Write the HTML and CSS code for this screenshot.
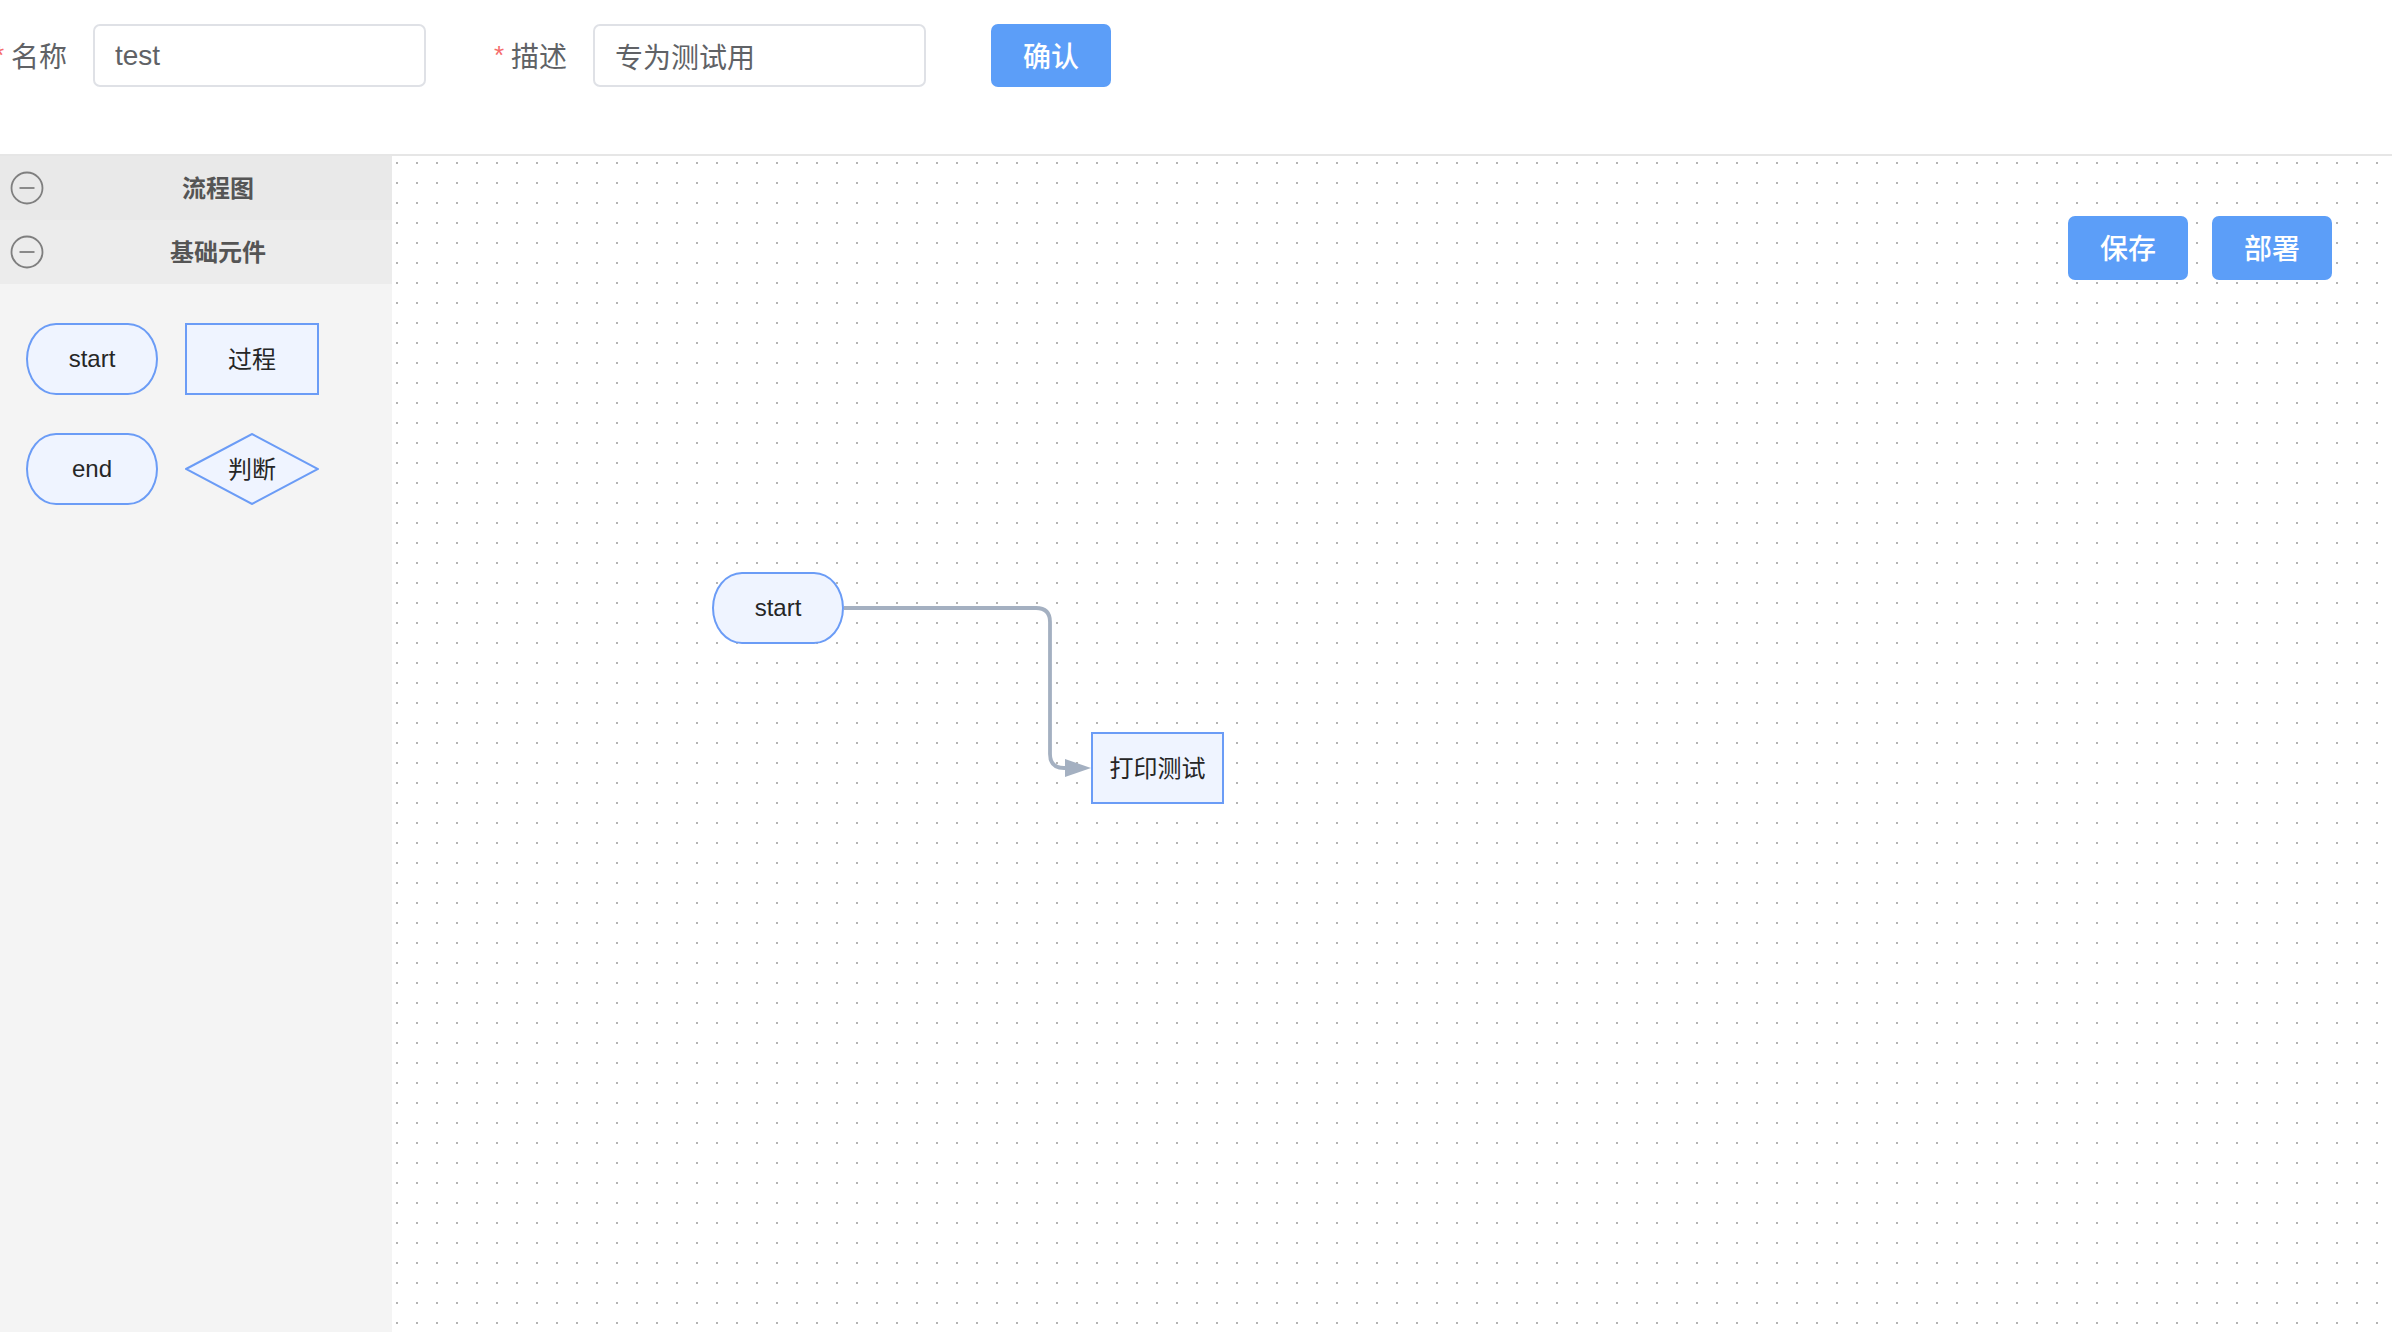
FILE: index.html
```html
<!DOCTYPE html>
<html lang="zh-CN">
<head>
<meta charset="utf-8">
<title>流程设计</title>
<link rel="stylesheet" href="styles.css">
</head>
<body>
<header class="topbar">
  <form class="form-row">
    <div class="form-item">
      <label class="form-label"><span class="star">*</span><span>名称</span></label>
      <input class="text-input" type="text" value="test">
    </div>
    <div class="form-item">
      <label class="form-label"><span class="star">*</span><span>描述</span></label>
      <input class="text-input" type="text" value="专为测试用">
    </div>
    <button type="button" class="btn">确认</button>
  </form>
</header>
<main class="workspace">
  <aside class="sidebar">
    <div class="panel-head head-a">
      <svg class="collapse-icon" viewBox="0 0 34 34" width="34" height="34"><circle cx="17" cy="17" r="15.5" fill="none" stroke="#7f7f7f" stroke-width="1.8"/><line x1="9.5" y1="17" x2="24.5" y2="17" stroke="#7f7f7f" stroke-width="1.8"/></svg>
      <span class="panel-title">流程图</span>
    </div>
    <div class="panel-head head-b">
      <svg class="collapse-icon" viewBox="0 0 34 34" width="34" height="34"><circle cx="17" cy="17" r="15.5" fill="none" stroke="#7f7f7f" stroke-width="1.8"/><line x1="9.5" y1="17" x2="24.5" y2="17" stroke="#7f7f7f" stroke-width="1.8"/></svg>
      <span class="panel-title">基础元件</span>
    </div>
    <div class="palette">
      <div class="shape pill">start</div>
      <div class="shape rect cjk">过程</div>
      <div class="shape pill">end</div>
      <div class="shape diamond cjk">
        <svg class="diamond-bg" viewBox="0 0 134 72" width="134" height="72"><polygon points="1,36 67,1 133,36 67,71" fill="#eff4ff" stroke="#6b9cf6" stroke-width="2"/></svg>
        <span class="diamond-text">判断</span>
      </div>
    </div>
  </aside>
  <section class="canvas">
    <div class="grid-dots"></div>
    <svg class="edges" width="2000" height="1176" viewBox="0 0 2000 1176">
      <path d="M452 452 H644 Q658 452 658 466 V598 Q658 612 672 612 H675" fill="none" stroke="#a4b0c1" stroke-width="3.8"/>
      <polygon points="673,603 699,612 673,621" fill="#a4b0c1"/>
    </svg>
    <div class="node pill node-start">start</div>
    <div class="node rect cjk node-print">打印测试</div>
    <div class="toolbar">
      <button type="button" class="btn btn-lg">保存</button>
      <button type="button" class="btn btn-lg">部署</button>
    </div>
  </section>
</main>
</body>
</html>
```
FILE: styles.css
```css
* { box-sizing: border-box; }
html, body {
  margin: 0;
  padding: 0;
  width: 2392px;
  height: 1332px;
  overflow: hidden;
  background: #ffffff;
  font-family: "Liberation Sans", "Noto Sans CJK SC", sans-serif;
}
.topbar {
  height: 156px;
  border-bottom: 2px solid #e6e6e6;
  padding-top: 24px;
}
.form-row {
  display: flex;
  align-items: center;
  gap: 65px;
  margin-left: -9px;
}
.form-item {
  display: flex;
  align-items: center;
}
.form-label {
  display: flex;
  align-items: center;
  font-size: 28px;
  line-height: 63px;
  color: #606266;
  padding-right: 26px;
  font-family: "Noto Sans CJK SC", sans-serif;
}
.star {
  display: inline-block;
  color: #f56c6c;
  width: 13px;
  text-align: right;
  margin-right: 7px;
  font-family: "Liberation Sans", sans-serif;
  font-size: 26px;
}
.text-input {
  width: 333px;
  height: 63px;
  border: 2px solid #dfe1e6;
  border-radius: 7px;
  padding: 0 20px;
  font-size: 28px;
  color: #606266;
  font-family: "Liberation Sans", "Noto Sans CJK SC", sans-serif;
  outline: none;
  background: #fff;
}
.btn {
  width: 120px;
  height: 63px;
  border: none;
  border-radius: 7px;
  background: #5c9ef8;
  color: #ffffff;
  font-size: 28px;
  font-weight: 500;
  font-family: "Noto Sans CJK SC", sans-serif;
  padding: 0 0 2px 0;
}
.btn-lg { height: 64px; }
.workspace {
  display: flex;
  height: 1176px;
}
.sidebar {
  width: 392px;
  flex: none;
  background: #f4f4f4;
}
.panel-head {
  height: 64px;
  display: flex;
  align-items: center;
  padding-left: 10px;
}
.head-a { background: #e9e9e9; }
.head-b { background: #ececec; }
.collapse-icon { flex: none; display: block; }
.panel-title {
  flex: 1;
  text-align: center;
  font-size: 24px;
  font-weight: 700;
  color: #555555;
  font-family: "Noto Sans CJK SC", sans-serif;
  padding-bottom: 4px;
}
.palette {
  display: grid;
  grid-template-columns: 132px 134px;
  column-gap: 27px;
  row-gap: 38px;
  padding: 39px 0 0 26px;
}
.shape, .node {
  height: 72px;
  display: flex;
  align-items: center;
  justify-content: center;
  font-size: 24px;
  color: #262626;
  font-family: "Liberation Sans", "Noto Sans CJK SC", sans-serif;
}
.cjk { padding-bottom: 3px; }
.pill {
  width: 132px;
  border: 2px solid #6b9cf6;
  border-radius: 30px / 36px;
  background: #eff4ff;
}
.rect {
  width: 134px;
  border: 2px solid #6b9cf6;
  background: #eff4ff;
}
.diamond {
  width: 134px;
  position: relative;
}
.diamond-bg {
  position: absolute;
  left: 0;
  top: 0;
}
.diamond-text { position: relative; }
.canvas {
  flex: 1;
  position: relative;
  background: #ffffff;
  overflow: hidden;
}
.grid-dots {
  position: absolute;
  inset: 0;
  background-image: linear-gradient(to right, #b4b4b4 2px, transparent 2px);
  background-size: 20px 20px;
  background-position: 4px 0;
  -webkit-mask-image: linear-gradient(to bottom, #000 2px, transparent 2px);
  -webkit-mask-size: 20px 20px;
  -webkit-mask-position: 0 6px;
  mask-image: linear-gradient(to bottom, #000 2px, transparent 2px);
  mask-size: 20px 20px;
  mask-position: 0 6px;
}
.edges {
  position: absolute;
  left: 0;
  top: 0;
}
.node { position: absolute; }
.node-start { left: 320px; top: 416px; }
.node-print { left: 699px; top: 576px; width: 133px; }
.toolbar {
  position: absolute;
  top: 60px;
  right: 60px;
  display: flex;
  gap: 24px;
}
```
